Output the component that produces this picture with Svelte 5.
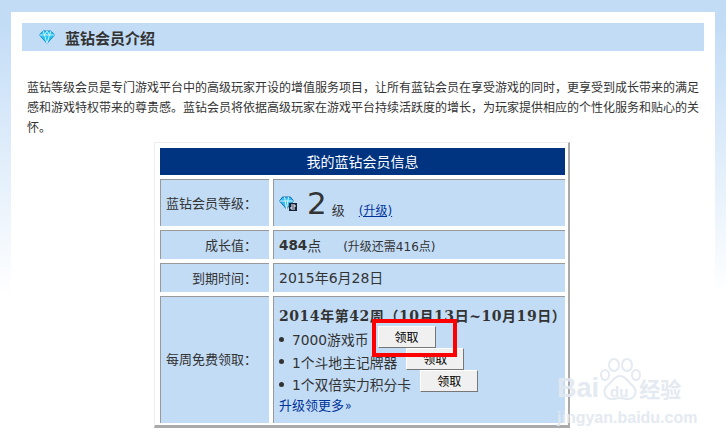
<script>
  const rewards = [
    { name: "7000游戏币", gap: 9, top: -5 },
    { name: "1个斗地主记牌器", gap: 9, top: -6 },
    { name: "1个双倍实力积分卡", gap: 9, top: -7 }
  ];
</script>

<div class="page">
  <div class="panel">
    <div class="heading">
      <svg class="gem" width="16" height="14" viewBox="0 0 16 14">
        <path d="M4 1h8l3.500 4L8 13.500.5 5z" fill="#26c3ee" stroke="#0b8fd0" />
        <path d="M.5 5h15M4 1l1.500 4L8 13.500 10.500 5 12 1M5.500 5 8 1l2.500 4" fill="none" stroke="#d8f6ff" stroke-width="0.9" />
      </svg>
      <h2>蓝钻会员介绍</h2>
    </div>

    <p class="intro">蓝钻等级会员是专门游戏平台中的高级玩家开设的增值服务项目，让所有蓝钻会员在享受游戏的同时，更享受到成长带来的满足感和游戏特权带来的尊贵感。蓝钻会员将依据高级玩家在游戏平台持续活跃度的增长，为玩家提供相应的个性化服务和贴心的关怀。</p>

    <div class="card">
      <div class="title">我的蓝钻会员信息</div>

      <div class="label">蓝钻会员等级：</div>
      <div class="value level">
        <svg class="gem-small" width="18" height="15" viewBox="0 0 18 15">
          <path d="M3.500 1h8l3 4-7 8-7-8z" fill="#35bdf0" stroke="#0e6fb5" />
          <path d="M.5 5h14M5.500 1 7.500 13 9.500 1" fill="none" stroke="#e4f8ff" stroke-width="0.9" />
          <rect x="10" y="7" width="8" height="8" fill="#14233a" />
          <path d="M12 9h4v2h-4v2h4" fill="none" stroke="#fff" />
        </svg>
        <span class="big">2</span>
        <span class="unit">级</span>
        <a href="#up" class="up">(升级)</a>
      </div>

      <div class="label right">成长值：</div>
      <div class="value"><b class="points">484</b>点<span class="need">(升级还需416点)</span></div>

      <div class="label right">到期时间：</div>
      <div class="value date">2015年6月28日</div>

      <div class="label weekly-label">每周免费领取：</div>
      <div class="value weekly">
        <div class="week">2014年第42周（10月13日~10月19日）</div>
        {#each rewards as r}
          <div class="reward">
            <span class="dot"></span>
            <span>{r.name}</span>
            <button style="margin-left: {r.gap}px; margin-top: {r.top}px">领取</button>
          </div>
        {/each}
        <a href="#more" class="more">升级领更多<span class="arrows">»</span></a>
      </div>
    </div>
  </div>

  <div class="highlight"></div>

  <div class="mark">
    <svg width="46" height="44" viewBox="0 0 46 44">
      <g fill="none" stroke="#e2e8f0" stroke-width="2">
        <ellipse cx="8" cy="17" rx="4" ry="5" />
        <ellipse cx="17" cy="7" rx="5" ry="6" />
        <ellipse cx="30" cy="7" rx="5" ry="6" />
        <ellipse cx="39" cy="17" rx="4" ry="5" />
        <path d="M23 18c6 0 8 6 13 10 5 5 2 13-5 13-3 0-5-1-8-1s-5 1-8 1c-7 0-10-8-5-13 5-4 7-10 13-10z" />
      </g>
    </svg>
    <div class="mark-row"><span>Bai</span><span class="du">du</span><span class="cn">经验</span></div>
    <div class="mark-url">jingyan.baidu.com</div>
  </div>
</div>

<style>
  :global(body) {
    margin: 0;
    background: #fff;
  }
  .page {
    position: relative;
    width: 726px;
    height: 436px;
    overflow: hidden;
    box-sizing: border-box;
    padding: 12px 11px 0;
    background: linear-gradient(#c2dcf6 0, #c2dcf6 20px, #ffffff 295px);
    font-family: "Noto Sans CJK SC", sans-serif;
    color: #333;
  }
  .panel {
    background: #fff;
    height: 424px;
    padding: 11px 11px 0;
    box-sizing: border-box;
  }
  .heading {
    display: flex;
    align-items: center;
    height: 28px;
    background: #c2dcf6;
    padding-left: 17px;
  }
  .gem {
    margin-right: 10px;
  }
  h2 {
    margin: 0;
    font-size: 15px;
    font-weight: bold;
    color: #333;
  }
  .intro {
    margin: 26px 0 0 5px;
    width: 674px;
    font-size: 12px;
    line-height: 20px;
    color: #333;
  }
  .card {
    display: grid;
    grid-template-columns: 109px 292px;
    grid-template-rows: 27px 47px 29px 29px 127px;
    gap: 4px;
    width: 405px;
    margin: 5px 0 0 132px;
    padding: 5px 3px 2px 5px;
    background: #fff;
    border-top: 1px solid #eee;
    border-left: 1px solid #eee;
    border-right: 2px solid #aaa;
    border-bottom: 3px solid #aaa;
  }
  .title {
    grid-column: 1 / 3;
    background: #003380;
    color: #fff;
    text-align: center;
    font-size: 14px;
    line-height: 27px;
  }
  .label,
  .value {
    display: flex;
    align-items: center;
    background: #c2dcf6;
    border-top: 1px solid #999;
    border-left: 1px solid #999;
    box-sizing: border-box;
  }
  .label {
    padding-left: 5px;
    padding-bottom: 2px;
    font-size: 13px;
  }
  .label.right {
    justify-content: flex-end;
    padding-right: 12px;
  }
  .weekly-label {
    padding-bottom: 4px;
  }
  .value {
    padding-left: 5px;
    font-family: "DejaVu Sans", "Noto Sans CJK SC", sans-serif;
    font-size: 14px;
  }
  .date {
    padding-bottom: 2px;
  }
  .big {
    font-size: 31px;
    line-height: 1;
    margin-left: 10px;
    margin-right: 5px;
  }
  .unit {
    font-size: 13px;
    margin-top: 12px;
  }
  .up {
    margin-left: 14px;
    margin-top: 12px;
    font-size: 12px;
    color: #003399;
  }
  .points {
    font-weight: bold;
    font-size: 13.5px;
  }
  .need {
    margin-left: 22px;
    font-size: 12px;
  }
  .weekly {
    display: block;
    padding-top: 9px;
  }
  .week {
    margin-bottom: 2px;
    font-family: "DejaVu Serif", "Noto Sans CJK SC", serif;
    font-weight: bold;
    font-size: 14px;
    line-height: 20px;
    white-space: nowrap;
    letter-spacing: 0.55px;
  }
  .reward {
    display: flex;
    align-items: center;
    height: 22.500px;
    font-size: 13.800px;
    white-space: nowrap;
  }
  .dot {
    flex: none;
    width: 5px;
    height: 5px;
    border-radius: 50%;
    background: #333;
    margin-right: 8px;
  }
  button {
    flex: none;
    width: 58px;
    height: 22px;
    padding: 0;
    background: #f0f0f0;
    border: 1px solid;
    border-color: #fff #777 #777 #fff;
    font-family: "Noto Sans CJK SC", sans-serif;
    font-size: 12px;
    color: #000;
  }
  .more {
    display: block;
    margin-top: -1px;
    font-family: "Noto Sans CJK SC", sans-serif;
    font-size: 13px;
    line-height: 20px;
    color: #003399;
    text-decoration: none;
  }
  .arrows {
    margin-left: 1px;
  }
  .highlight {
    position: absolute;
    left: 372px;
    top: 319px;
    width: 77px;
    height: 30px;
    border: 4px solid #fe0000;
  }
  .mark {
    position: absolute;
    left: 557px;
    top: 358px;
    width: 132px;
    color: #e2e8f0;
    opacity: 0.9;
    pointer-events: none;
  }
  .mark svg {
    position: absolute;
    left: 40px;
    top: 0;
  }
  .mark-row {
    display: flex;
    align-items: baseline;
    margin-top: 16px;
    font-family: "Liberation Sans", sans-serif;
    font-weight: bold;
    font-size: 27px;
    line-height: 28px;
  }
  .du {
    font-size: 15px;
    margin-left: 11px;
  }
  .cn {
    font-family: "Noto Sans CJK SC", sans-serif;
    font-size: 21px;
    margin-left: 11px;
  }
  .mark-url {
    margin-top: 3px;
    font-family: "Liberation Sans", sans-serif;
    font-weight: bold;
    font-size: 16px;
    line-height: 18px;
    white-space: nowrap;
  }
</style>
